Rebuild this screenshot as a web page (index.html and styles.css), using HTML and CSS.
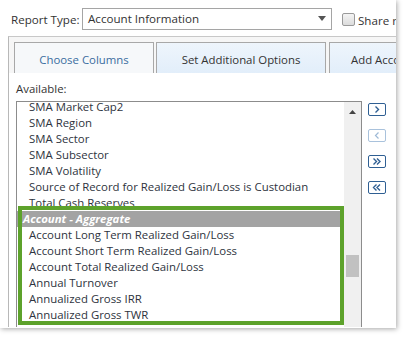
FILE: index.html
```html
<!DOCTYPE html>
<html>
<head>
<meta charset="utf-8">
<link rel="stylesheet" href="styles.css">
</head>
<body>
<div class="frame">
  <div class="toprow">
    <span class="label">Report Type:</span>
    <div class="select">
      <span>Account Information</span>
      <svg class="caret" width="8" height="5" viewBox="0 0 8 5"><path d="M0 0H8L4 5Z" fill="#555"/></svg>
    </div>
    <span class="checkbox"></span>
    <span class="share">Share report</span>
  </div>
  <div class="panel">
    <div class="tabs">
      <div class="tab tab-first">Choose Columns</div>
      <div class="tab tab-second">Set Additional Options</div>
      <div class="tab tab-third">Add Account Group</div>
    </div>
    <div class="content">
      <div class="avail">Available:</div>
      <div class="pickrow">
        <div class="listbox">
          <div class="items">
            <div class="item">SMA Market Cap2</div>
            <div class="item">SMA Region</div>
            <div class="item">SMA Sector</div>
            <div class="item">SMA Subsector</div>
            <div class="item">SMA Volatility</div>
            <div class="item">Source of Record for Realized Gain/Loss is Custodian</div>
            <div class="item">Total Cash Reserves</div>
            <div class="group">Account - Aggregate</div>
            <div class="item">Account Long Term Realized Gain/Loss</div>
            <div class="item">Account Short Term Realized Gain/Loss</div>
            <div class="item">Account Total Realized Gain/Loss</div>
            <div class="item">Annual Turnover</div>
            <div class="item">Annualized Gross IRR</div>
            <div class="item">Annualized Gross TWR</div>
          </div>
          <div class="scrollbar">
            <svg class="uparrow" width="7" height="4" viewBox="0 0 7 4"><path d="M0 4H7L3.5 0Z" fill="#444"/></svg>
            <div class="thumb"></div>
          </div>
          <div class="highlight"></div>
        </div>
        <div class="buttons">
          <div class="btn"><svg width="8" height="7" viewBox="0 0 8 7"><path d="M2.5 0.5L5.5 3.5L2.5 6.5" fill="none" stroke="#2f5f93" stroke-width="1.4"/></svg></div>
          <div class="btn disabled"><svg width="8" height="7" viewBox="0 0 8 7"><path d="M5.5 0.5L2.5 3.5L5.5 6.5" fill="none" stroke="#9db9d6" stroke-width="1.2"/></svg></div>
          <div class="btn"><svg width="10" height="7" viewBox="0 0 10 7"><path d="M1.5 0.5L4.5 3.5L1.5 6.5M5 0.5L8 3.5L5 6.5" fill="none" stroke="#2f5f93" stroke-width="1.4"/></svg></div>
          <div class="btn"><svg width="10" height="7" viewBox="0 0 10 7"><path d="M4.5 0.5L1.5 3.5L4.5 6.5M8 0.5L5 3.5L8 6.5" fill="none" stroke="#2f5f93" stroke-width="1.4"/></svg></div>
        </div>
      </div>
    </div>
  </div>
</div>
</body>
</html>
```
FILE: styles.css
```css
html, body {
  margin: 0;
  padding: 0;
  background: #fff;
}
body {
  width: 407px;
  height: 339px;
  overflow: hidden;
  font-family: "Open Sans", "Noto Sans", sans-serif;
  font-size: 11.4px;
  color: #333;
}
.frame {
  width: 396px;
  height: 328px;
  background: #fff;
  overflow: hidden;
  box-shadow: 1px 1px 5px rgba(0,0,0,0.35);
}
.toprow {
  display: flex;
  align-items: center;
  height: 22px;
  padding: 8px 0 0 11px;
  white-space: nowrap;
}
.toprow > * {
  flex: none;
}
.label {
  width: 71px;
  font-size: 11.6px;
  color: #333;
}
.select {
  box-sizing: border-box;
  width: 250px;
  height: 22px;
  border: 1px solid #a5a5a5;
  display: flex;
  align-items: center;
  justify-content: space-between;
  padding: 0 5px 1px 5px;
  font-size: 11.6px;
  color: #333;
}
.checkbox {
  box-sizing: border-box;
  width: 13px;
  height: 13px;
  margin-left: 10px;
  border: 1px solid #9a9a9a;
  border-radius: 2px;
  background: linear-gradient(#f4f4f4, #dcdcdc);
}
.share {
  margin-left: 3px;
  font-size: 11.6px;
  margin-top: 3px;
}
.panel {
  margin: 6px 0 0 8px;
  height: 290px;
  border-top: 1px solid #c8c8c8;
  border-left: 1px solid #b8b8b8;
  background: #f6f6f6;
  overflow: hidden;
}
.tabs {
  display: flex;
  padding: 5px 0 0 5px;
  white-space: nowrap;
}
.tab {
  box-sizing: border-box;
  height: 31px;
  border: 1px solid #a8a8a8;
  border-bottom: none;
  display: flex;
  align-items: center;
  justify-content: center;
  font-size: 11.4px;
  flex: none;
  padding-top: 2px;
}
.tab-first {
  width: 140px;
  background: #f6f8fa;
  color: #3a6d9f;
}
.tab-second {
  width: 170px;
  margin-left: 2px;
  background: linear-gradient(#eef5fc, #e2eefa);
  color: #333;
}
.tab-third {
  width: 150px;
  margin-left: 3px;
  justify-content: flex-start;
  padding-left: 21px;
  background: linear-gradient(#eef5fc, #e2eefa);
  color: #333;
}
.content {
  background: #fff;
  height: 260px;
  padding-left: 7px;
}
.avail {
  padding-top: 9px;
  height: 19px;
  line-height: 14px;
  font-size: 11.4px;
}
.pickrow {
  display: flex;
  align-items: flex-start;
}
.listbox {
  position: relative;
  box-sizing: border-box;
  width: 346px;
  height: 240px;
  border: 1px solid #8c8c8c;
  border-bottom: none;
  display: flex;
  overflow: hidden;
}
.items {
  flex: 1;
  margin-top: -3px;
  white-space: nowrap;
  overflow: hidden;
}
.item {
  height: 16px;
  line-height: 16px;
  padding-left: 12px;
  font-size: 11.4px;
  color: #2e3440;
}
.group {
  height: 16px;
  line-height: 16px;
  padding-left: 6px;
  background: #a3a3a3;
  color: #fff;
  font-weight: bold;
  font-style: italic;
  font-size: 11.4px;
}
.scrollbar {
  position: relative;
  width: 17px;
  background: #f0f0f0;
  flex: none;
}
.uparrow {
  position: absolute;
  left: 5px;
  top: 8px;
}
.thumb {
  position: absolute;
  left: 2px;
  top: 153px;
  width: 13px;
  height: 22px;
  background: #c1c1c1;
}
.highlight {
  position: absolute;
  left: 1px;
  top: 104px;
  width: 326px;
  height: 119px;
  box-sizing: border-box;
  border: 4px solid #5da22b;
}
.buttons {
  display: flex;
  flex-direction: column;
  gap: 13px;
  margin-left: 6px;
  margin-top: 2px;
}
.btn {
  box-sizing: border-box;
  width: 18px;
  height: 13px;
  border: 1px solid #2f5f93;
  border-radius: 2px;
  background: #fff;
  display: flex;
  align-items: center;
  justify-content: center;
}
.btn.disabled {
  border-color: #a9c2dc;
}
```
